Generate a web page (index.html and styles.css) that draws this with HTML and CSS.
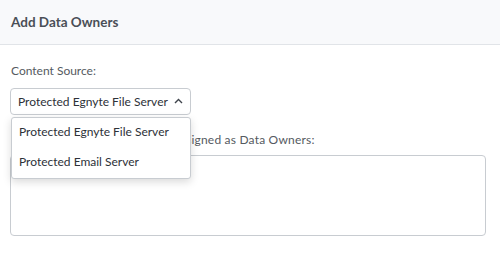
FILE: index.html
```html
<!DOCTYPE html>
<html lang="en">
    <head>
        <meta charset="UTF-8">
        <title>Add Data Owners</title>
        <link rel="stylesheet" href="styles.css">
    </head>
    <body>
        <div class="header">
            <h1>Add Data Owners</h1>
        </div>

        <div class="content">
            <div class="field">
                <label>Content Source:</label>
                <div class="select-wrap">
                    <div class="select">
                        Protected Egnyte File Server
                        <svg class="caret" width="9" height="6" viewBox="0 0 9 6">
                            <path d="M1 5 L4.5 1.5 L8 5" fill="none" stroke="#3f444c" stroke-width="1.4"/>
                        </svg>
                    </div>
                    <ul class="menu">
                        <li>Protected Egnyte File Server</li>
                        <li>Protected Email Server</li>
                    </ul>
                </div>
            </div>

            <div class="field">
                <label class="tight">Select users and groups to be assigned as Data Owners:</label>
                <div class="textarea"></div>
            </div>
        </div>
    </body>
</html>
```

FILE: styles.css
```css
body {
    margin: 0;
    font-family: "Lato", "Open Sans", sans-serif;
    color: #3f444c;
    background: #fff;
}

.header {
    height: 44px;
    background-color: #f8f9fb;
    border-bottom: 1px solid #e1e4e8;
    display: flex;
    align-items: center;
    padding-left: 11px;
}

.header h1 {
    margin: 0;
    font-size: 13.5px;
    font-weight: bold;
    color: #4a4f57;
}

.content {
    padding: 18px 14px 0 10px;
}

.field {
    margin-bottom: 17px;
}

.field label {
    display: block;
    font-size: 12px;
    color: #555a61;
    margin-left: 1px;
    margin-bottom: 9px;
    line-height: 16px;
}

.field label.tight {
    margin-bottom: 7px;
    letter-spacing: 0.2px;
}

.select-wrap {
    position: relative;
    display: inline-block;
}

.select {
    display: flex;
    align-items: center;
    gap: 6px;
    height: 25px;
    padding: 0 7px 0 7px;
    border: 1px solid #c8ccd1;
    border-radius: 4px;
    font-size: 12px;
    color: #2d3138;
}

.caret {
    margin-top: -1px;
}

.menu {
    position: absolute;
    top: 29px;
    left: 1px;
    right: 0;
    margin: 0;
    padding: 0;
    list-style: none;
    background: #fff;
    border: 1px solid #c8ccd1;
    border-radius: 3px;
    box-shadow: 0 3px 8px rgba(0, 0, 0, 0.15);
    z-index: 2;
}

.menu li {
    font-size: 12px;
    color: #2d3138;
    line-height: 28px;
    padding: 0 0 2px 7px;
}

.textarea {
    height: 79px;
    border: 1px solid #c8ccd1;
    border-radius: 4px;
}
```
